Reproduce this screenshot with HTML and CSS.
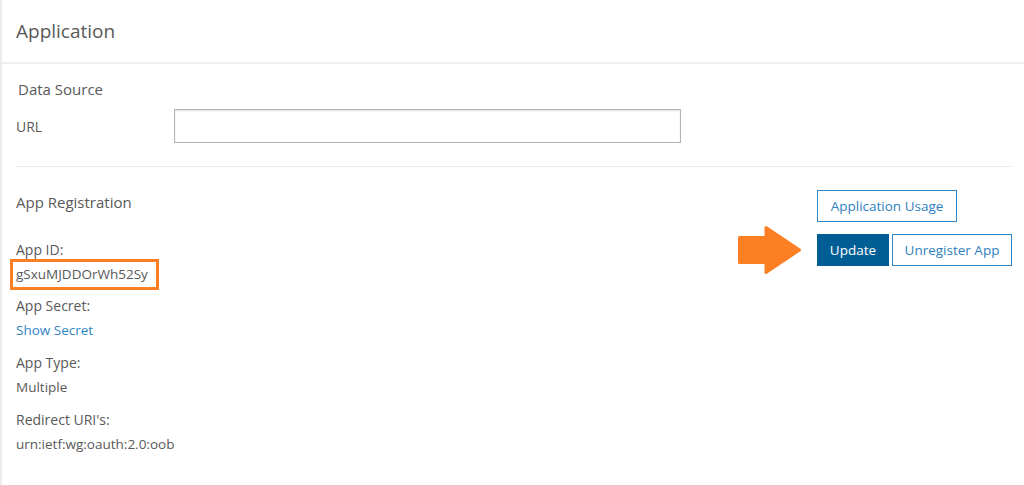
FILE: index.html
```html
<!DOCTYPE html>
<html lang="en">
<head>
  <meta charset="UTF-8" />
  <title>Application</title>
  <link rel="stylesheet" href="styles.css">
</head>
<body>
  <div class="page">
    <div class="page-header">Application</div>

    <section class="data-source">
      <h2 class="section-title indent">Data Source</h2>
      <div class="url-row">
        <label for="url">URL</label>
        <input type="text" id="url" />
      </div>
    </section>

    <section class="registration">
      <div class="reg-info">
        <h2 class="section-title">App Registration</h2>

        <div class="field first">
          <div class="field-label">App ID:</div>
          <div class="field-value app-id">gSxuMJDDOrWh52Sy</div>
        </div>

        <div class="field tight">
          <div class="field-label">App Secret:</div>
          <a class="field-value link" href="#">Show Secret</a>
        </div>

        <div class="field">
          <div class="field-label">App Type:</div>
          <div class="field-value">Multiple</div>
        </div>

        <div class="field">
          <div class="field-label">Redirect URI's:</div>
          <div class="field-value">urn:ietf:wg:oauth:2.0:oob</div>
        </div>
      </div>

      <div class="reg-actions">
        <button type="button" class="btn btn-usage">Application Usage</button>
        <div class="btn-row">
          <svg class="arrow" width="63" height="48" viewBox="0 0 63 48">
            <polygon points="1.5,11.5 28,11.5 28,1.5 61.5,24 28,46.5 28,36.5 1.5,36.5" fill="#fd7f23" stroke="#fd7f23" stroke-width="3" stroke-linejoin="round"/>
          </svg>
          <button type="button" class="btn btn-primary">Update</button>
          <button type="button" class="btn btn-unregister">Unregister App</button>
        </div>
      </div>
    </section>
  </div>
</body>
</html>
```

FILE: styles.css
```css
body {
  margin: 0;
  padding: 0;
  background: #fff;
  font-family: "Open Sans", "Noto Sans", Arial, sans-serif;
  color: #595959;
}

.page {
  border-left: 2px solid #ececec;
  min-height: 485px;
  box-sizing: border-box;
}

.page-header {
  height: 62px;
  line-height: 62px;
  padding-left: 14px;
  font-size: 19px;
  border-bottom: 2px solid #f0f0f0;
}

.data-source {
  margin: 0 12px 0 14px;
  padding: 15px 0 23px;
  border-bottom: 1px solid #ececec;
}

.section-title {
  margin: 0;
  font-size: 15px;
  font-weight: normal;
  line-height: 20px;
}

.indent {
  padding-left: 2px;
}

.url-row {
  display: flex;
  align-items: center;
  margin-top: 10px;
}

.url-row label {
  width: 158px;
  font-size: 14px;
}

.url-row input {
  width: 507px;
  height: 34px;
  box-sizing: border-box;
  border: 1px solid #b3b3b3;
  box-shadow: inset 0 1px 2px rgba(0,0,0,0.12);
  margin: 0;
}

.registration {
  display: flex;
  justify-content: space-between;
  margin: 0 12px 0 14px;
  padding-top: 23px;
}

.reg-info {
  padding-top: 2px;
}

.field {
  margin-top: 11px;
  font-size: 14px;
}

.field.first {
  margin-top: 26px;
}

.field.tight {
  margin-top: 4px;
}

.field-label {
  padding-top: 2px;
  line-height: 20px;
}

.field-value {
  display: block;
  margin-top: 4px;
  font-size: 13.5px;
  line-height: 20px;
}

.app-id {
  display: inline-block;
  margin: -1px 0 0 -6px;
  padding: 0 8px 0 3px;
  line-height: 25px;
  border: 3px solid #fd7f23;
}

.link {
  color: #2f86c6;
  text-decoration: none;
}

.reg-actions {
  display: flex;
  flex-direction: column;
  align-items: flex-start;
  gap: 12px;
}

.btn-row {
  display: flex;
  align-items: center;
  gap: 3px;
  margin-left: -79px;
}

.arrow {
  margin: -8px 13px -8px 0;
}

.btn {
  height: 32px;
  padding: 0;
  font-family: inherit;
  font-size: 13.5px;
  color: #2f7fbf;
  background: #fff;
  border: 1px solid #2f86c6;
  cursor: pointer;
}

.btn-usage {
  width: 140px;
}

.btn-primary {
  width: 72px;
  background: #005e95;
  border-color: #005e95;
  color: #fff;
}

.btn-unregister {
  width: 120px;
}
```
